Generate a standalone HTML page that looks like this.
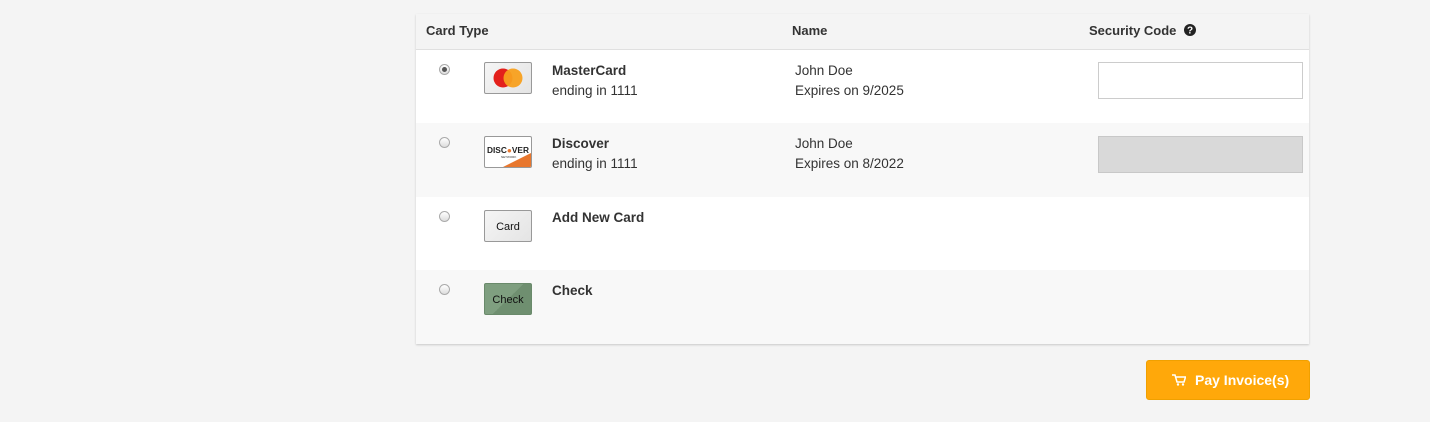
<!DOCTYPE html>
<html><head><meta charset="utf-8"><style>
body{margin:0;background:#f4f4f4;font-family:"Liberation Sans",Arial,sans-serif;font-size:13.5px;color:#333;width:1430px;height:422px;position:relative;overflow:hidden}
.box{position:absolute;left:416px;top:14px;width:893px;height:330px;background:#fff;box-shadow:0 1px 2px rgba(0,0,0,.18)}
.hdr{position:absolute;left:0;top:0;width:893px;height:35px;background:#f4f4f4;border-bottom:1px solid #e0e0e0;font-weight:bold;font-size:13px}
.hdr span{position:absolute;top:9px}
.row{position:absolute;left:0;width:893px;height:74px}
.radio{position:absolute;left:23px;top:14px;width:11px;height:11px;border-radius:50%;border:1px solid #aaa;background:linear-gradient(#fff,#ddd);box-sizing:border-box}
.radio.on::after{content:"";position:absolute;left:2px;top:2px;width:5px;height:5px;border-radius:50%;background:#555}
.cimg{position:absolute;left:68px;top:12px;width:48px;height:32px;box-sizing:border-box;border:1px solid #999;border-radius:2px;background:linear-gradient(135deg,#f5f5f5,#e4e4e4);overflow:hidden}
.l1{position:absolute;left:136px;top:13px;font-weight:bold}
.l2{position:absolute;left:136px;top:33px}
.n1{position:absolute;left:379px;top:13px}
.n2{position:absolute;left:379px;top:33px}
.inp{position:absolute;left:682px;top:12px;width:205px;height:37px;box-sizing:border-box;border:1px solid #ccc;background:#fff}
.btn{position:absolute;left:1146px;top:360px;width:164px;height:40px;background:#ffa80a;border:1px solid #f0a000;box-sizing:border-box;border-radius:3px;color:#fff;font-weight:bold;font-size:14px}
</style></head><body>
<div class="box">
 <div class="hdr"><span style="left:10px">Card Type</span><span style="left:376px">Name</span><span style="left:673px">Security Code <svg width="12" height="12" viewBox="0 0 12 12" style="vertical-align:-1px;margin-left:4px"><circle cx="6" cy="6" r="6" fill="#222"/><text x="6" y="9.5" font-size="10" font-weight="bold" fill="#fff" text-anchor="middle" font-family="Liberation Sans">?</text></svg></span></div>
 <div class="row" style="top:36px;background:#fff">
  <div class="radio on"></div>
  <div class="cimg"><svg width="46" height="30"><circle cx="18" cy="15" r="9.5" fill="#e3201b"/><circle cx="28" cy="15" r="9.5" fill="#f8a01d" opacity=".95"/></svg></div>
  <div class="l1">MasterCard</div><div class="l2">ending in 1111</div>
  <div class="n1">John Doe</div><div class="n2">Expires on 9/2025</div>
  <div class="inp"></div>
 </div>
 <div class="row" style="top:109px;background:#f8f8f8">
  <div class="radio"></div>
  <div class="cimg" style="background:#fff;top:13px"><svg width="46" height="30"><polygon points="18,30 46,16 46,30" fill="#e8772e"/><text x="2" y="16" font-size="8" font-weight="bold" font-family="Liberation Sans" fill="#222" textLength="42" lengthAdjust="spacingAndGlyphs">DISC<tspan fill="#e8772e">●</tspan>VER</text><text x="16" y="21" font-size="3" fill="#333" font-family="Liberation Sans">NETWORK</text></svg></div>
  <div class="l1">Discover</div><div class="l2">ending in 1111</div>
  <div class="n1">John Doe</div><div class="n2">Expires on 8/2022</div>
  <div class="inp" style="background:#d9d9d9;border-color:#c8c8c8;top:13px"></div>
 </div>
 <div class="row" style="top:183px;background:#fff">
  <div class="radio"></div>
  <div class="cimg" style="text-align:center;line-height:32px;font-size:11px;color:#111;top:13px">Card</div>
  <div class="l1">Add New Card</div>
 </div>
 <div class="row" style="top:256px;background:#f8f8f8">
  <div class="radio"></div>
  <div class="cimg" style="text-align:center;line-height:32px;font-size:11px;color:#111;top:13px;background:linear-gradient(135deg,#7f9f80 50%,#6f8f70 50%);border-color:#6a8a6b">Check</div>
  <div class="l1">Check</div>
 </div>
</div>
<div class="btn"><svg width="14" height="12" viewBox="0 0 14 12" style="position:absolute;left:25px;top:13px"><path d="M0 1h3l2 7h7l1.5-5H4" fill="none" stroke="#fff" stroke-width="1.5"/><circle cx="6" cy="10.5" r="1.2" fill="#fff"/><circle cx="11" cy="10.5" r="1.2" fill="#fff"/></svg><span style="position:absolute;left:48px;top:11px">Pay Invoice(s)</span></div>
</body></html>
